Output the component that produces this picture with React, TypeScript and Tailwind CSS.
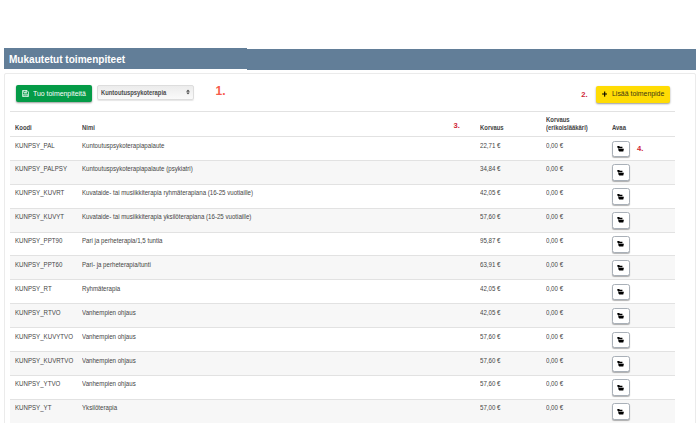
import React from 'react';
import { FaPlus, FaSort } from 'react-icons/fa';

interface Procedure {
    code: string;
    name: string;
    price: string;
}

const procedures: Procedure[] = [
    { code: 'KUNPSY_PAL', name: 'Kuntoutuspsykoterapiapalaute', price: '22,71 €' },
    { code: 'KUNPSY_PALPSY', name: 'Kuntoutuspsykoterapiapalaute (psykiatri)', price: '34,84 €' },
    { code: 'KUNPSY_KUVRT', name: 'Kuvataide- tai musiikkiterapia ryhmäterapiana (16-25 vuotiaille)', price: '42,05 €' },
    { code: 'KUNPSY_KUVYT', name: 'Kuvataide- tai musiikkiterapia yksilöterapiana (16-25 vuotiaille)', price: '57,60 €' },
    { code: 'KUNPSY_PPT90', name: 'Pari ja perheterapia/1,5 tuntia', price: '95,87 €' },
    { code: 'KUNPSY_PPT60', name: 'Pari- ja perheterapia/tunti', price: '63,91 €' },
    { code: 'KUNPSY_RT', name: 'Ryhmäterapia', price: '42,05 €' },
    { code: 'KUNPSY_RTVO', name: 'Vanhempien ohjaus', price: '42,05 €' },
    { code: 'KUNPSY_KUVYTVO', name: 'Vanhempien ohjaus', price: '57,60 €' },
    { code: 'KUNPSY_KUVRTVO', name: 'Vanhempien ohjaus', price: '57,60 €' },
    { code: 'KUNPSY_YTVO', name: 'Vanhempien ohjaus', price: '57,60 €' },
    { code: 'KUNPSY_YT', name: 'Yksilöterapia', price: '57,00 €' },
];

const columns = 'grid grid-cols-[67px_371.5px_26.5px_66px_66px_68px] pl-[5px]';
const cell = 'origin-left scale-x-[0.87] whitespace-nowrap';

const SaveIcon = () => (
    <svg viewBox="0 0 14 14" className="mr-[3.8px] size-[7px]" fill="none" stroke="currentColor" strokeWidth="1.4">
        <path d="M1 1h9l3 3v9H1z" />
        <path d="M3.5 1v4h6V1M3.5 13V8h7v5M5 10.3h4" />
        <path d="M7.7 1v4" />
    </svg>
);

const FolderIcon = () => (
    <svg viewBox="0 0 16 14" className="h-[6px] w-[7px] text-black" fill="currentColor">
        <path d="M0 1.5 1.5 0h3.5l1.5 2h6v3.2H4.2L3 7.2z" />
        <path d="M4.6 6.6H16l-1.5 6.4H5L2.2 8.8z" />
    </svg>
);

const Toolbar: React.FC = () => (
    <div className="flex h-[37px] items-start pl-[11px] pr-[25px] pt-[11px]">
        <button className="flex h-[17px] w-[76px] items-center whitespace-nowrap rounded-[2px] bg-[#049b47] pl-[6px] text-[7.7px] text-white shadow-[0_1px_2px_rgba(0,0,0,0.4)]">
            <SaveIcon />
            <span className="origin-left scale-x-[0.9]">Tuo toimenpiteitä</span>
        </button>
        <div className="ml-[5px] flex h-[14.5px] w-[96.5px] items-center justify-between rounded-[2px] border border-[#ddd] bg-linear-to-b from-[#ececec] to-[#fafafa] pl-[3px] pr-[2px] text-[6.8px] font-bold leading-[8px] text-[#4c4c4c] shadow-[0_1px_1px_rgba(0,0,0,0.1)]">
            <span className="origin-left scale-x-[0.86] pt-px">Kuntoutuspsykoterapia</span>
            <FaSort className="size-[6px]" />
        </div>
        <span className="ml-[22px] text-[12px] font-bold leading-[12px] text-[#f75b4c]">1.</span>
        <span className="ml-auto mr-[8px] mt-[5px] text-[7.6px] font-bold leading-[9px] text-[#cf2536]">2.</span>
        <button className="mt-px flex h-[16.5px] w-[74.5px] items-center whitespace-nowrap rounded-[2px] bg-[#ffdc04] pl-[6px] text-[7.7px] text-[#3b3713] shadow-[0_1px_2px_rgba(0,0,0,0.4)]">
            <FaPlus className="mr-[5px] size-[6px] text-black" />
            <span className="origin-left scale-x-[0.9]">Lisää toimenpide</span>
        </button>
    </div>
);

const App: React.FC = () => {
    return (
        <div className="h-[423px] w-[700px] overflow-hidden bg-white pl-1 pt-12 font-['Liberation_Sans',sans-serif] text-[#454545]">
            <div className="flex h-[25px] w-[692px] items-start">
                <div className="h-[21px] w-[243px] bg-[#627e98] pl-[5px]">
                    <h1 className="origin-left scale-x-[0.94] whitespace-nowrap text-[10.7px] font-semibold leading-[22px] text-white">
                        Mukautetut toimenpiteet
                    </h1>
                </div>
                <div className="mt-px h-[21px] grow bg-[#627e98]" />
            </div>
            <main className="h-[360px] w-[692px] rounded-t-[2px] border border-[#ebebeb]">
                <Toolbar />
                <div className="ml-[5px] w-[665px]">
                    <div className={`${columns} h-[25px] border-t border-[#e2e2e2] text-[6.8px] font-bold leading-[8px] text-[#444]`}>
                        <span className={`${cell} pt-[12px]`}>Koodi</span>
                        <span className={`${cell} pt-[12px]`}>Nimi</span>
                        <span className="pt-[10px] text-[7.6px] text-[#cf2536]">3.</span>
                        <span className={`${cell} pt-[12px]`}>Korvaus</span>
                        <span className={`${cell} pt-[4px]`}>
                            Korvaus
                            <br />
                            (erikoislääkäri)
                        </span>
                        <span className={`${cell} pt-[12px]`}>Avaa</span>
                    </div>
                    {procedures.map((item, index) => (
                        <div
                            key={item.code}
                            className={`${columns} h-[23.9px] border-t border-[#e2e2e2] pt-[3.5px] text-[7.05px] leading-[9px] ${index % 2 === 1 ? 'bg-[#f7f7f7]' : 'bg-white'}`}
                        >
                            <span className={cell}>{item.code}</span>
                            <span className={cell}>{item.name}</span>
                            <span />
                            <span className={cell}>{item.price}</span>
                            <span className={cell}>0,00 €</span>
                            <div className="flex">
                                <button className="flex h-[16.5px] w-[17.5px] items-center justify-center rounded-[2.5px] border border-[#a9b0b8] bg-white shadow-[0_1px_1px_rgba(0,0,0,0.3)]">
                                    <FolderIcon />
                                </button>
                                {index === 0 && (
                                    <span className="ml-[7.5px] mt-[3px] text-[7.6px] font-bold leading-[9px] text-[#cf2536]">4.</span>
                                )}
                            </div>
                        </div>
                    ))}
                </div>
            </main>
        </div>
    );
};

export default App;
